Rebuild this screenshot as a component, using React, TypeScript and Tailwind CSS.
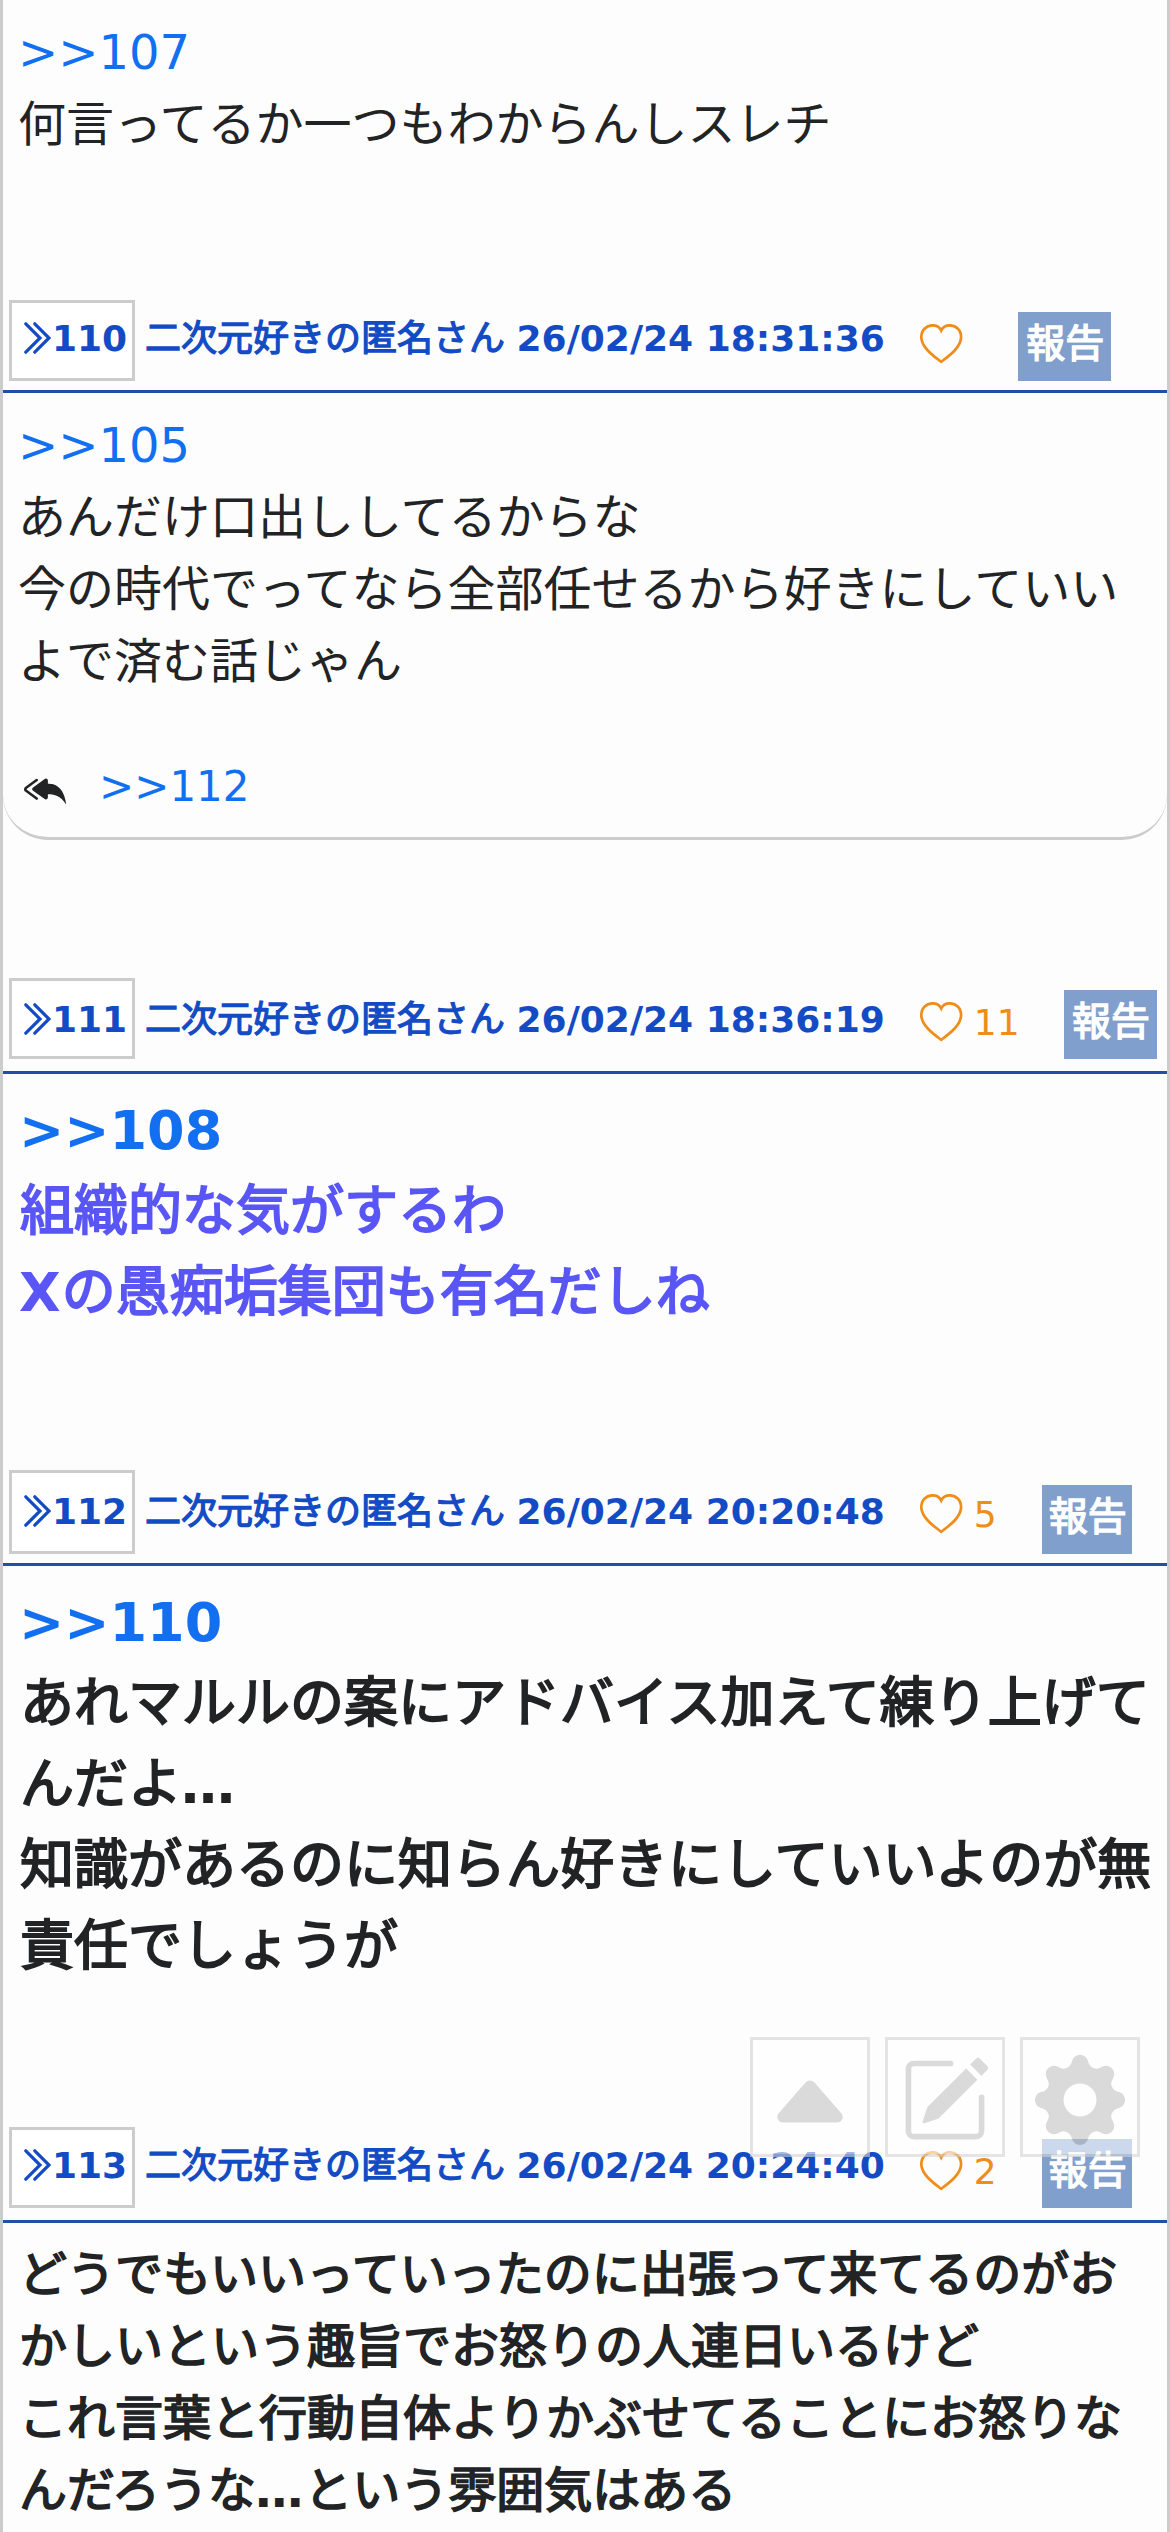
import React from 'react';
import { BsCaretUpFill, BsGearFill, BsPencilSquare, BsReplyAllFill } from 'react-icons/bs';

const DoubleChevron = ({ className }: any) => (
  <svg
    viewBox="0 0 27 32"
    fill="none"
    stroke="currentColor"
    strokeWidth="3.2"
    strokeLinecap="round"
    className={`h-8 w-[27px] shrink-0 ${className}`}
  >
    <path d="M1.8 1.8 16 16 1.8 30.2M10.8 1.8 25 16 10.8 30.2" />
  </svg>
);

const Heart = () => (
  <svg
    viewBox="0 0 43 40"
    fill="none"
    stroke="currentColor"
    strokeWidth="2.7"
    className="ml-[35px] mt-6 h-10 w-[43px] shrink-0 text-[#ee8d1a]"
  >
    <path d="M21.2 37.8C15 33 1.5 24 1.3 13.2 1.3 6 6.6 1.3 12.6 1.3c4.1 0 7.1 2 8.6 5.2 1.5-3.2 4.5-5.2 8.6-5.2 6 0 11.3 4.7 11.3 11.9C40.9 24 27.4 33 21.2 37.8Z" />
  </svg>
);

// Japanese glyphs are thickened from the regular weight, latin ones use the real bold
const Jp = ({ children }: any) => (
  <span className="ml-px -mr-px font-normal [-webkit-text-stroke:0.035em_currentColor]">{children}</span>
);

const PostHeader = ({
  no,
  date,
  likes,
  height = 'h-24',
  box = 'h-[81px] pt-3',
  text = 'mt-[15px]',
  report = 'ml-11 mt-3 w-[93px]',
}: any) => (
  <div className={`flex items-start border-b-[3px] border-[#1f4fa8] pl-1.5 text-[36px] font-bold leading-[54px] text-[#134bc5] ${height}`}>
    <div className={`flex w-[126px] shrink-0 items-start border-[3px] border-[#ccc] bg-white pl-3 ${box}`}>
      <DoubleChevron className="mt-2.5" />
      <span className="ml-px">{no}</span>
    </div>
    <span className={`ml-[9px] whitespace-pre ${text}`}><Jp>二次元好きの匿名さん</Jp> {date}</span>
    <Heart />
    <span className="ml-[11px] mt-[18px] font-normal text-[#ee8d1a]">{likes}</span>
    <button className={`h-[69px] shrink-0 bg-[#819fcd] pb-[7px] text-[39px] leading-[57px] text-white ${report}`}>
      <Jp>報告</Jp>
    </button>
  </div>
);

const Anchor = ({ children }: any) => (
  <a className="text-[#126ff0]">{children}</a>
);

const FloatButton = ({ children }: any) => (
  <button className="flex h-[120px] w-[120px] items-center justify-center border-[3px] border-[#d4d4d4] bg-white pt-[5px] text-[#c3c3c3]">
    {children}
  </button>
);

export default function App() {
  return (
    <div
      lang="ja"
      className="relative h-[2532px] w-[1170px] overflow-hidden border-x-[3px] border-[#ccc] bg-[#fdfdfd] font-['DejaVu_Sans','Noto_Sans_CJK_JP',sans-serif] text-[48px] leading-[72px] text-[#212325]"
    >
      <div className="h-[300px] px-[15px] pt-4">
        <p><Anchor>&gt;&gt;107</Anchor></p>
        <p>何言ってるか一つもわからんしスレチ</p>
      </div>

      <PostHeader no="110" date="26/02/24 18:31:36" height="h-[93px]" box="h-[81px] pt-[9px]" text="mt-3" />
      <div className="h-[447px] rounded-b-[45px] border-b-[3px] border-[#ccc] px-[15px] pt-4">
        <p><Anchor>&gt;&gt;105</Anchor></p>
        <p>
          あんだけ口出ししてるからな<br />
          今の時代でってなら全部任せるから好きにしていい<br />
          よで済む話じゃん
        </p>
        <div className="mt-[54px] flex h-[72px] items-start text-[42px]">
          <BsReplyAllFill className="ml-1.5 mt-[17px] h-[42px] w-[42px]" />
          <span className="ml-[33px]"><Anchor>&gt;&gt;112</Anchor></span>
        </div>
      </div>

      <div className="h-[138px]" />
      <PostHeader no="111" date="26/02/24 18:36:19" likes="11" />
      <div className="h-[396px] px-4 pt-4 text-[54px] font-bold leading-[81px]">
        <p><Anchor>&gt;&gt;108</Anchor></p>
        <p className="text-[#5956f5]">
          <Jp>組織的な気がするわ</Jp><br />
          X<Jp>の愚痴垢集団も有名だしね</Jp>
        </p>
      </div>

      <PostHeader
        no="112"
        date="26/02/24 20:20:48"
        likes="5"
        box="h-[84px] pt-3"
        report="ml-[45px] mt-[15px] w-[90px]"
      />
      <div className="h-[561px] whitespace-nowrap px-4 pt-4 text-[54px] font-bold leading-[81px]">
        <p><Anchor>&gt;&gt;110</Anchor></p>
        <p>
          <Jp>あれマルルの案にアドバイス加えて練り上げて</Jp><br />
          <Jp>んだよ</Jp>…<br />
          <Jp>知識があるのに知らん好きにしていいよのが無</Jp><br />
          <Jp>責任でしょうが</Jp>
        </p>
      </div>

      <PostHeader
        no="113"
        date="26/02/24 20:24:40"
        likes="2"
        box="h-[81px] pt-[9px]"
        text="mt-3"
        report="ml-[45px] mt-3 w-[90px]"
      />
      <p className="px-[15px] pt-[15px] font-bold">
        <Jp>どうでもいいっていったのに出張って来てるのがお</Jp><br />
        <Jp>かしいという趣旨でお怒りの人連日いるけど</Jp><br />
        <Jp>これ言葉と行動自体よりかぶせてることにお怒りな</Jp><br />
        <Jp>んだろうな</Jp>…<Jp>という雰囲気はある</Jp>
      </p>

      <div className="absolute right-[27px] top-[2037px] flex gap-[15px] opacity-60">
        <FloatButton><BsCaretUpFill className="h-[90px] w-[90px]" /></FloatButton>
        <FloatButton><BsPencilSquare className="h-[90px] w-[90px]" /></FloatButton>
        <FloatButton><BsGearFill className="h-[90px] w-[90px]" /></FloatButton>
      </div>
    </div>
  );
}
